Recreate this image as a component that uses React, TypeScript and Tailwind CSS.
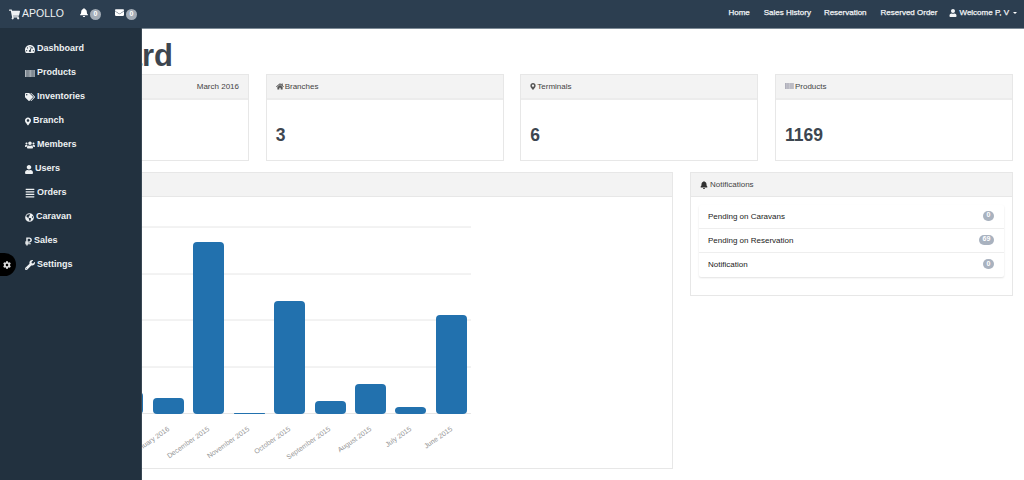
import { FaBell, FaEnvelope, FaShoppingCart, FaTachometerAlt, FaTags, FaMapMarkerAlt, FaUsers, FaUser, FaAlignJustify, FaGlobeAmericas, FaRubleSign, FaWrench, FaCog, FaHome } from 'react-icons/fa';
import type { ReactNode } from 'react';

function Barcode({ className }: { className?: string }) {
  return (
    <svg viewBox="0 0 10 7" className={className} fill="currentColor">
      {[0, 1.4, 2.6, 3.8, 5.2, 6.4, 7.6, 8.8].map((x) => (
        <rect key={x} x={x} y="0" width="0.9" height="7" />
      ))}
    </svg>
  );
}

const menu = [
  { label: 'Dashboard', icon: <FaTachometerAlt className="w-[10px] h-[10px]" /> },
  { label: 'Products', icon: <Barcode className="w-[10px] h-[7px] opacity-80" /> },
  { label: 'Inventories', icon: <FaTags className="w-[10px] h-[10px]" /> },
  { label: 'Branch', icon: <FaMapMarkerAlt className="w-[6px] h-[9px]" /> },
  { label: 'Members', icon: <FaUsers className="w-[10px] h-[10px]" /> },
  { label: 'Users', icon: <FaUser className="w-[8px] h-[9px]" /> },
  { label: 'Orders', icon: <FaAlignJustify className="w-[10px] h-[10px]" /> },
  { label: 'Caravan', icon: <FaGlobeAmericas className="w-[9px] h-[9px]" /> },
  { label: 'Sales', icon: <FaRubleSign className="w-[7px] h-[9px]" /> },
  { label: 'Settings', icon: <FaWrench className="w-[10px] h-[10px]" /> },
];

const bars = [
  { x: 112, top: 392 },
  { x: 153, top: 398 },
  { x: 193, top: 242 },
  { x: 234, top: 413 },
  { x: 274, top: 301 },
  { x: 315, top: 401 },
  { x: 355, top: 384 },
  { x: 395, top: 407 },
  { x: 436, top: 315 },
];

const labels = [
  { text: 'January 2016', x: 170 },
  { text: 'December 2015', x: 210 },
  { text: 'November 2015', x: 250 },
  { text: 'October 2015', x: 291 },
  { text: 'September 2015', x: 331 },
  { text: 'August 2015', x: 372 },
  { text: 'July 2015', x: 412 },
  { text: 'June 2015', x: 453 },
];

function StatCard({ icon, title, value, right }: { icon: ReactNode; title: string; value?: string; right?: string }) {
  return (
    <div className="w-[238px] h-[87px] border border-[#e7e7e7] bg-white">
      <div className="h-[25px] bg-[#f3f3f3] border-b-2 border-[#ececec] pl-[9px] pr-[9px] flex items-center justify-between text-[8px] text-[#444]">
        <span className="flex items-center gap-[1px]">
          {icon}
          {title}
        </span>
        {right && <span>{right}</span>}
      </div>
      <div className="pl-[9px] pt-[23px] text-[17.5px] leading-[24px] font-bold text-[#3d4650]">{value}</div>
    </div>
  );
}

function NotifRow({ label, count, wide }: { label: string; count: string; wide?: boolean }) {
  return (
    <div className="h-[24px] flex items-center justify-between pl-[9px] pr-[10px] border-b border-[#eeeeee] last:border-b-0 text-[8px] text-[#222]">
      <span>{label}</span>
      <span className={`h-[10px] rounded-full bg-[#a9b2bf] text-white text-[7px] font-bold flex items-center justify-center -mt-[2px] ${wide ? 'w-[15px]' : 'w-[11px]'}`}>
        {count}
      </span>
    </div>
  );
}

export default function App() {
  return (
    <div className="relative w-[1024px] h-[480px] overflow-hidden bg-white font-['Liberation_Sans',Arial,sans-serif]">
      {/* top bar */}
      <div className="h-[29px] bg-[#2c3e50] border-b border-[#7c8a96] flex items-center justify-between pl-[9px] pr-[7px] text-white">
        <div className="flex items-center">
          <span className="flex items-center gap-[2px] text-[10.5px] text-[#eef1f3]">
            <FaShoppingCart className="w-[11px] h-[11px]" />
            APOLLO
          </span>
          <span className="ml-[16px] flex items-center gap-[2px]">
            <FaBell className="w-[8px] h-[9px] -mt-[3px]" />
            <span className="w-[11px] h-[11px] rounded-full bg-[#a3acb6] text-[7px] font-bold flex items-center justify-center">0</span>
          </span>
          <span className="ml-[14px] flex items-center gap-[2px]">
            <FaEnvelope className="w-[9px] h-[9px] -mt-[3px]" />
            <span className="w-[11px] h-[11px] rounded-full bg-[#a3acb6] text-[7px] font-bold flex items-center justify-center">0</span>
          </span>
        </div>
        <div className="flex items-center text-[8px] -mt-[3px] text-[#f2f4f6] [-webkit-text-stroke:0.25px_#f2f4f6]">
          <span>Home</span>
          <span className="ml-[14px]">Sales History</span>
          <span className="ml-[13px]">Reservation</span>
          <span className="ml-[14px]">Reserved Order</span>
          <span className="ml-[12px] flex items-center gap-[2px]">
            <FaUser className="w-[8px] h-[8px]" />
            Welcome P, V
            <span className="ml-[2px] w-0 h-0 border-x-[2px] border-x-transparent border-t-[2.5px] border-t-white" />
          </span>
        </div>
      </div>

      {/* page content, partly covered by the sidebar */}
      <div className="pl-[11px] pr-[11px]">
        <h1 className="h-[44px] pt-[12px] text-[31px] leading-[30px] font-bold text-[#3d4650]">Dashboard</h1>
        <div className="flex justify-between mt-[1px]">
          <StatCard icon={<FaTachometerAlt className="w-[8px] h-[8px]" />} title="Sales" value="0" right="March 2016" />
          <StatCard icon={<FaHome className="w-[8px] h-[7px] text-[#555]" />} title="Branches" value="3" />
          <StatCard icon={<FaMapMarkerAlt className="w-[6px] h-[7px] text-[#555]" />} title="Terminals" value="6" />
          <StatCard icon={<Barcode className="w-[9px] h-[6px] text-[#9a9aa8] -mt-[2px]" />} title="Products" value="1169" />
        </div>
        <div className="flex justify-between mt-[11px]">
          <div className="w-[662px] h-[297px] border border-[#e7e7e7]">
            <div className="h-[24px] bg-[#f3f3f3] border-b border-[#e7e7e7]" />
            <svg width="660" height="271" viewBox="12 197 660 271" className="block">
              {[227, 274, 320, 367, 413.5].map((y) => (
                <line key={y} x1="12" x2="471" y1={y} y2={y} stroke="#e6e6e6" />
              ))}
              {bars.map((b) => (
                <rect
                  key={b.x}
                  x={b.x}
                  y={b.top}
                  width="31"
                  height={414 - b.top}
                  rx={b.top > 412 ? 0.5 : 4}
                  fill="#2271ae"
                />
              ))}
              {labels.map((l) => (
                <text
                  key={l.text}
                  x={l.x}
                  y={430}
                  fontSize="7"
                  fill="#959595"
                  textAnchor="end"
                  transform={`rotate(-35 ${l.x} 430)`}
                >
                  {l.text}
                </text>
              ))}
            </svg>
          </div>
          <div className="w-[323px] h-[124px] border border-[#e7e7e7]">
            <div className="h-[24px] bg-[#f3f3f3] border-b border-[#e7e7e7] pl-[9px] flex items-center gap-[2px] text-[8px] text-[#444]">
              <FaBell className="w-[8px] h-[8px] text-[#333]" />
              Notifications
            </div>
            <div className="mx-[8px] mt-[8px] rounded-[2px] shadow-[0_1px_2px_rgba(0,0,0,0.12)]">
              <NotifRow label="Pending on Caravans" count="0" />
              <NotifRow label="Pending on Reservation" count="69" wide />
              <NotifRow label="Notification" count="0" />
            </div>
          </div>
        </div>
      </div>

      {/* sidebar overlay */}
      <div className="absolute left-0 top-[28px] bottom-0 w-[142px] bg-[#22313f] border-r border-[#3a4855] pt-[9px] pl-[25px]">
        {menu.map((m) => (
          <div key={m.label} className="h-[24px] flex items-center gap-[2px] text-[9px] font-bold text-[#eef1f3]">
            {m.icon}
            {m.label}
          </div>
        ))}
      </div>

      {/* settings gear tab */}
      <div className="absolute left-0 top-[253px] w-[16px] h-[23px] pr-[3px] bg-black rounded-r-full flex items-center justify-center text-[#dddddd]">
        <FaCog className="w-[8px] h-[8px]" />
      </div>
    </div>
  );
}
